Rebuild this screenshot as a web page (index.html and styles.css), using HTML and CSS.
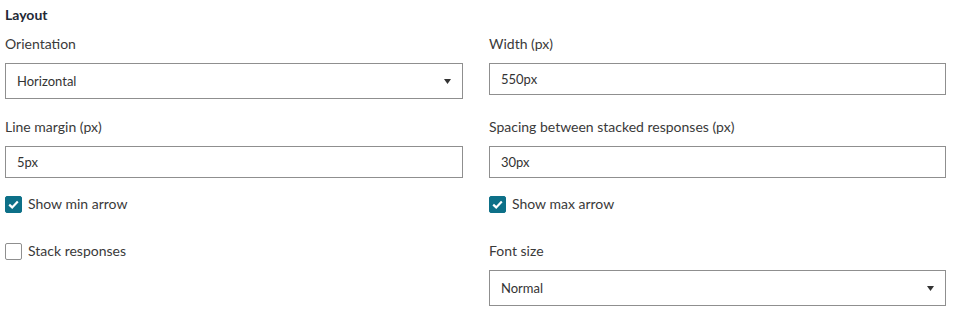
FILE: index.html
```html
<!DOCTYPE html>
<html>
<head>
<meta charset="utf-8">
<link rel="stylesheet" href="styles.css">
</head>
<body>
<div class="panel">
  <h3 class="heading">Layout</h3>
  <div class="grid">
    <div class="field">
      <div class="label">Orientation</div>
      <div class="select"><span>Horizontal</span><svg class="caret" width="7" height="5" viewBox="0 0 7 5"><path d="M0 0H7L3.5 5Z" fill="#333"/></svg></div>
    </div>
    <div class="field">
      <div class="label">Width (px)</div>
      <div class="input">550px</div>
    </div>
    <div class="field">
      <div class="label">Line margin (px)</div>
      <div class="input">5px</div>
    </div>
    <div class="field">
      <div class="label">Spacing between stacked responses (px)</div>
      <div class="input">30px</div>
    </div>
    <div class="check">
      <span class="box checked"><svg width="11" height="9" viewBox="0 0 11 9"><path d="M1.2 4.6L4.2 7.4L9.8 1.6" fill="none" stroke="#fff" stroke-width="2.2"/></svg></span>
      <span class="check-label">Show min arrow</span>
    </div>
    <div class="check">
      <span class="box checked"><svg width="11" height="9" viewBox="0 0 11 9"><path d="M1.2 4.6L4.2 7.4L9.8 1.6" fill="none" stroke="#fff" stroke-width="2.2"/></svg></span>
      <span class="check-label">Show max arrow</span>
    </div>
    <div class="check check-lower">
      <span class="box"></span>
      <span class="check-label">Stack responses</span>
    </div>
    <div class="field">
      <div class="label">Font size</div>
      <div class="select"><span>Normal</span><svg class="caret" width="7" height="5" viewBox="0 0 7 5"><path d="M0 0H7L3.5 5Z" fill="#333"/></svg></div>
    </div>
  </div>
</div>
</body>
</html>
```
FILE: styles.css
```css
html, body {
  margin: 0;
  padding: 0;
  background: #fff;
}
body {
  font-family: Lato, "Open Sans", sans-serif;
  color: #333;
}
.panel {
  padding: 0 13px 0 5px;
}
.heading {
  margin: 5px 0 9px;
  font-size: 14px;
  line-height: 20px;
  font-weight: 700;
  color: #1f2a36;
}
.grid {
  display: grid;
  grid-template-columns: 458px 457px;
  column-gap: 26px;
  row-gap: 18px;
  align-items: start;
}
.label {
  font-size: 14px;
  line-height: 20px;
  margin-bottom: 9px;
  color: #3a3a3a;
}
.select,
.input {
  box-sizing: border-box;
  border: 1px solid #8f8f8f;
  background: #fff;
  font-size: 13px;
  color: #333;
  display: flex;
  align-items: center;
  padding: 0 11px;
}
.select {
  height: 36px;
  justify-content: space-between;
}
.input {
  height: 32px;
}
.caret {
  margin-top: 1px;
}
.check {
  display: flex;
  align-items: center;
  height: 18px;
  margin-top: -1px;
  margin-bottom: 10px;
}
.check-lower {
  margin-top: 1px;
}
.box {
  box-sizing: border-box;
  width: 17px;
  height: 17px;
  border: 1px solid #8f8f8f;
  border-radius: 2px;
  display: flex;
  align-items: center;
  justify-content: center;
  margin-right: 6px;
  background: #fff;
}
.box.checked {
  background: #0d7088;
  border-color: #0d7088;
}
.check-label {
  font-size: 14px;
  line-height: 20px;
  color: #3a3a3a;
}
```
